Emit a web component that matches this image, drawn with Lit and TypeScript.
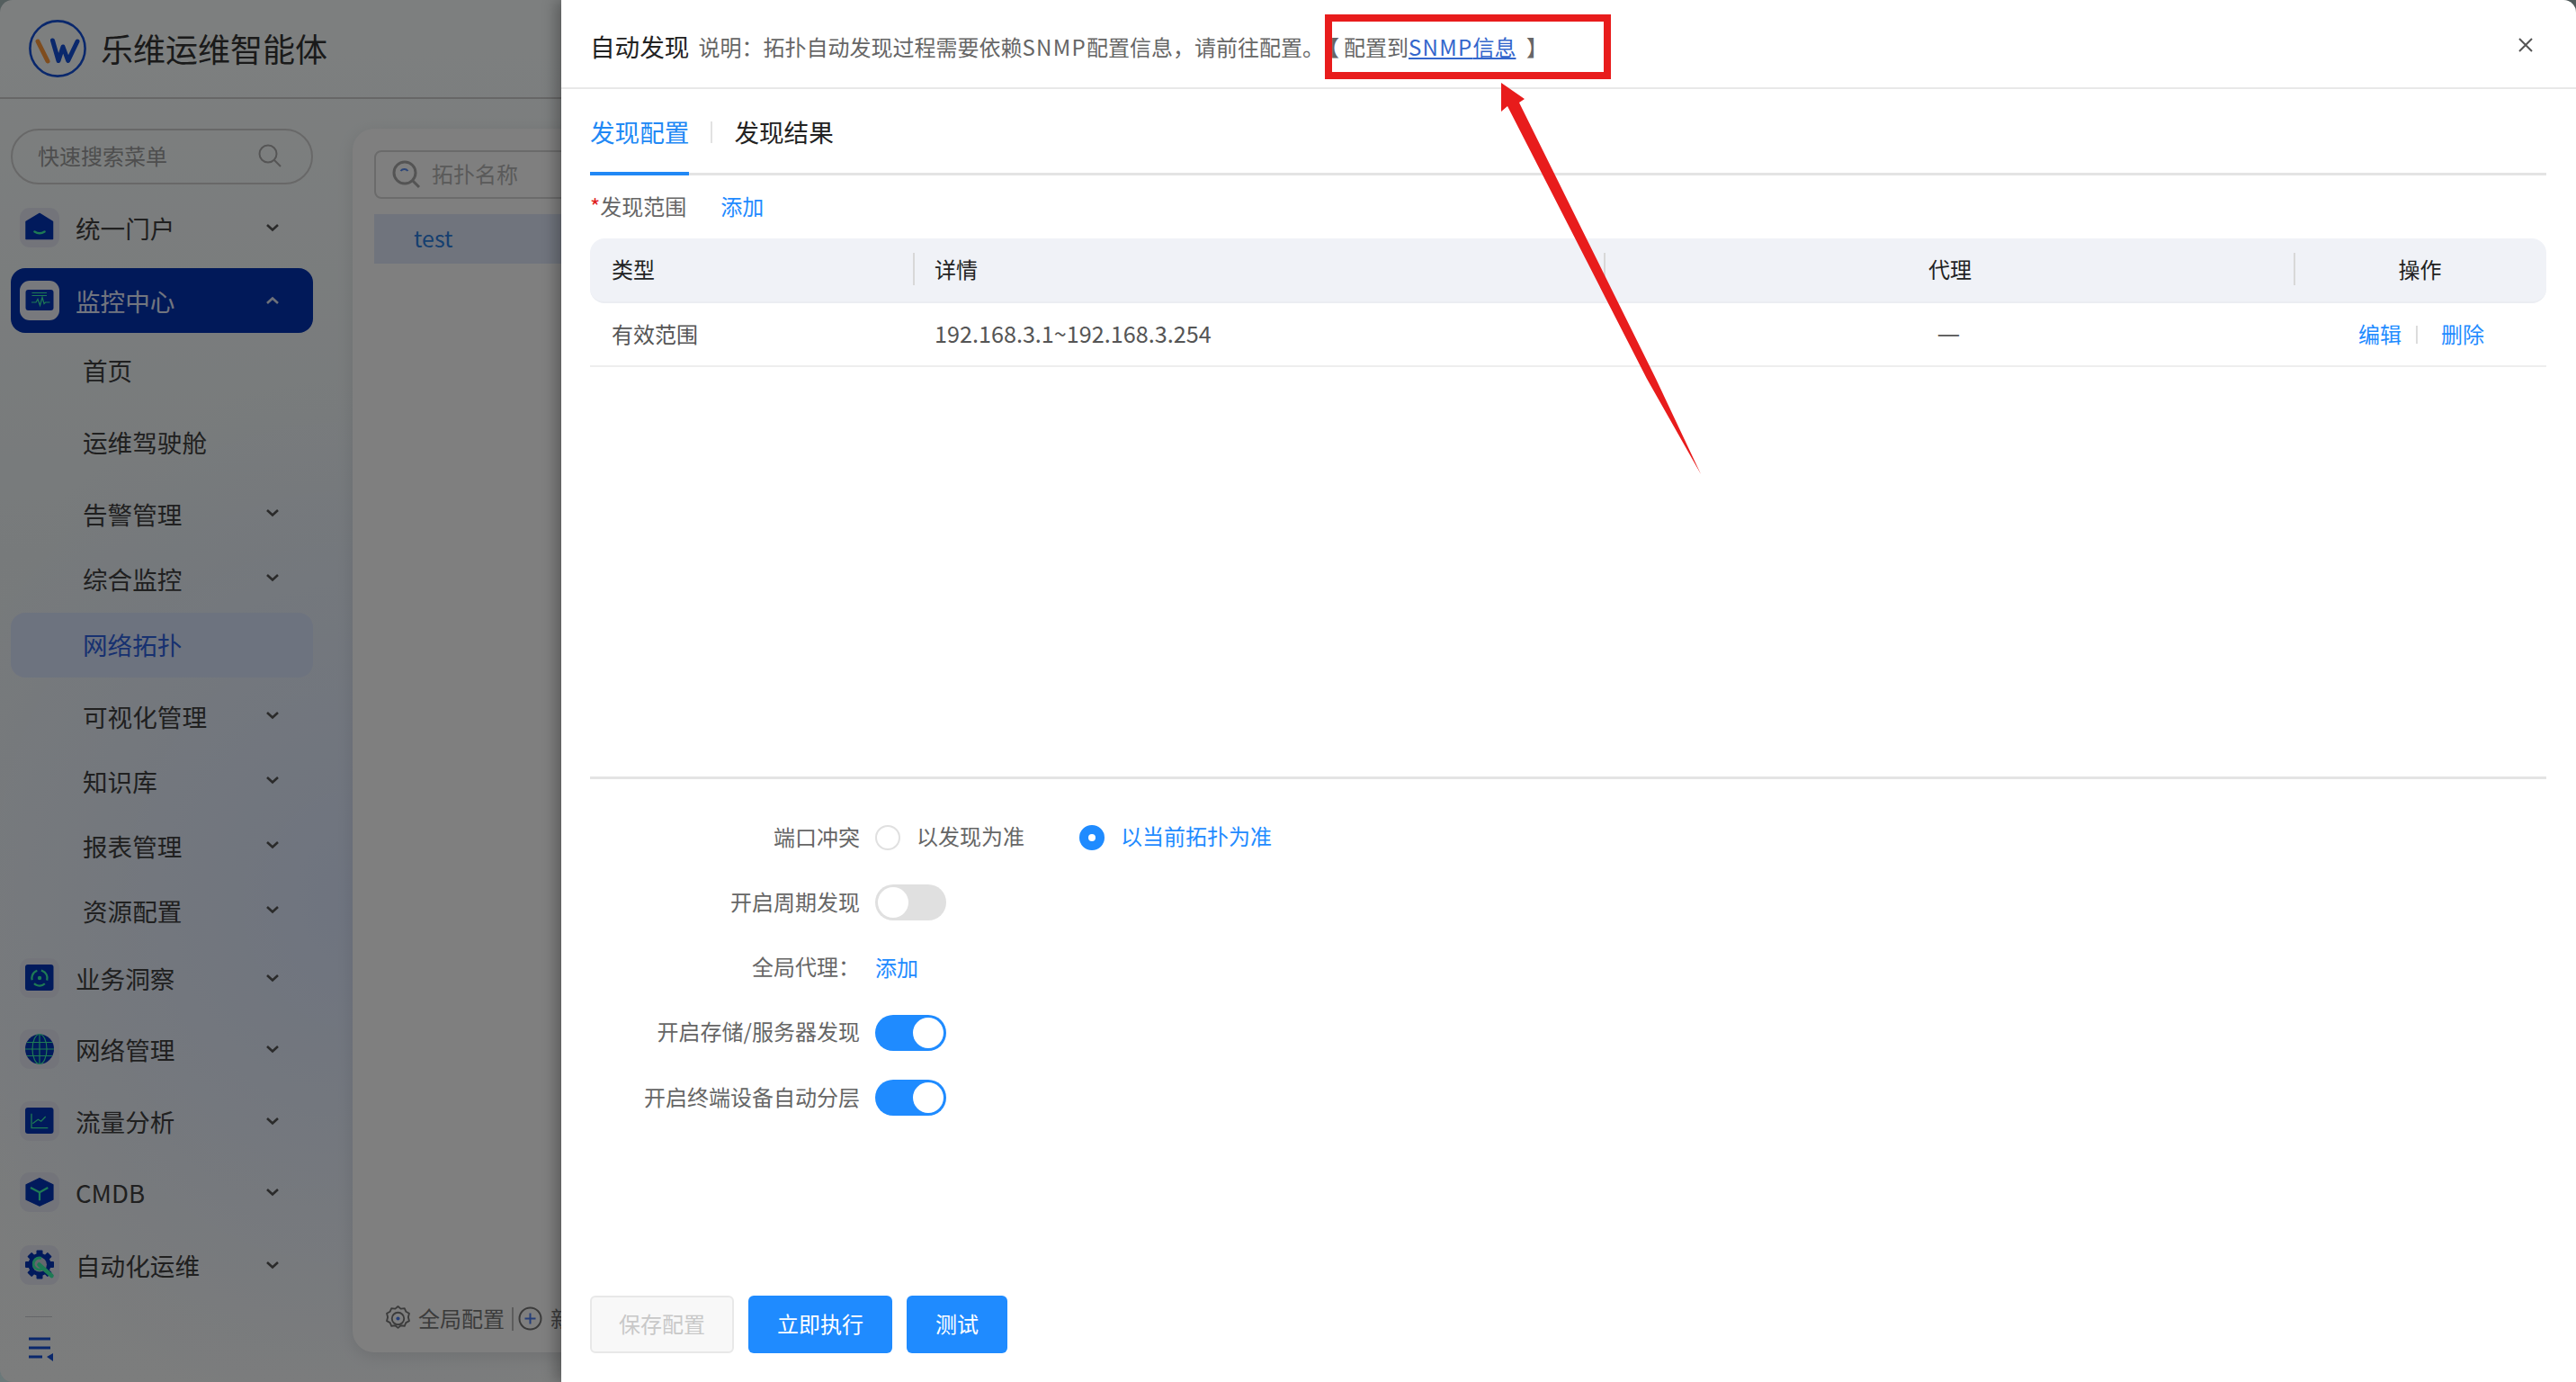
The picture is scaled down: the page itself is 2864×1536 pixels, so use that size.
import { LitElement, html, css, svg } from "lit";
import { customElement } from "lit/decorators.js";

const DARK = "#0234b8";
const GREEN = "#3df5a8";

const icons: Record<string, unknown> = {
  home: svg`<path d="M7 34.5V15.5L22 6.5 36.5 15.5V34.5Z" fill="${DARK}" stroke="${DARK}" stroke-width="1.5" stroke-linejoin="round"/><path d="M16.5 26.5q5.5 3.5 11 0" fill="none" stroke="${GREEN}" stroke-width="2.6" stroke-linecap="round"/>`,
  monitor: svg`<rect x="6.5" y="10" width="31" height="23" rx="3" fill="${DARK}"/><path d="M13.5 13.5H30M13.5 16.5H30" stroke="${GREEN}" stroke-width="1.2"/><path d="M13 24h5l2-3.5 2.5 7 2.500-9 2 7 1.500-1.500h5" fill="none" stroke="${GREEN}" stroke-width="1.2"/>`,
  insight: svg`<rect x="6" y="7" width="31.5" height="29" rx="3" fill="${DARK}"/><circle cx="22" cy="22" r="8.6" fill="none" stroke="${GREEN}" stroke-width="2.2" stroke-dasharray="13 4.5" transform="rotate(-70 22 22)"/><circle cx="22" cy="22" r="2.2" fill="${GREEN}"/>`,
  globe: svg`<ellipse cx="22" cy="22" rx="16" ry="16.5" fill="${DARK}"/><g fill="none" stroke="${GREEN}" stroke-width="1.2"><path d="M6 22H38M8 14.5H36M8 29.5H36M22 5.5V38.5"/><ellipse cx="22" cy="22" rx="8" ry="16.5"/></g>`,
  chart: svg`<rect x="6" y="7" width="31.5" height="29" rx="3" fill="${DARK}"/><path d="M13 13.7V29.7H31.3" fill="none" stroke="${GREEN}" stroke-width="1.3"/><path d="M14.3 24.7L20.3 20.3 23.7 22.3 28.7 17" fill="none" stroke="${GREEN}" stroke-width="1.3"/>`,
  cube: svg`<path d="M22 6.5L37 13.8V30.2L22 37.2 7 30.2V13.8Z" fill="${DARK}" stroke="${DARK}" stroke-width="1.2" stroke-linejoin="round"/><path d="M12 17L22 22.3 31.3 17M22 22.3V31.3" fill="none" stroke="${GREEN}" stroke-width="2.2"/>`,
  gear: svg`<g fill="${DARK}"><rect x="18.5" y="5.5" width="7" height="32" rx="1"/><rect x="18.5" y="5.5" width="7" height="32" rx="1" transform="rotate(45 22 21.5)"/><rect x="18.5" y="5.5" width="7" height="32" rx="1" transform="rotate(90 22 21.5)"/><rect x="18.5" y="5.5" width="7" height="32" rx="1" transform="rotate(135 22 21.5)"/><circle cx="22" cy="21.5" r="12.5"/></g><circle cx="22" cy="21.5" r="8" fill="#c9cfdc"/><path d="M21.5 21.5L35.5 34" fill="none" stroke="${GREEN}" stroke-width="4.6" stroke-linecap="round"/><path d="M24 14.5a6.5 6.5 0 1 0 2.5 10.5" fill="none" stroke="${GREEN}" stroke-width="3"/>`,
};

interface Item {
  label: string;
  gap: number;
  icon?: string;
  chevron?: boolean;
  open?: boolean;
  active?: boolean;
  current?: boolean;
}

const MENU: Item[] = [
  { label: "统一门户", gap: 0, icon: "home", chevron: true },
  { label: "监控中心", gap: 9, icon: "monitor", chevron: true, open: true, active: true },
  { label: "首页", gap: 6 },
  { label: "运维驾驶舱", gap: 8 },
  { label: "告警管理", gap: 8, chevron: true },
  { label: "综合监控", gap: 0, chevron: true },
  { label: "网络拓扑", gap: 1, current: true },
  { label: "可视化管理", gap: 8, chevron: true },
  { label: "知识库", gap: 0, chevron: true },
  { label: "报表管理", gap: 0, chevron: true },
  { label: "资源配置", gap: 0, chevron: true },
  { label: "业务洞察", gap: 2, icon: "insight", chevron: true },
  { label: "网络管理", gap: 7, icon: "globe", chevron: true },
  { label: "流量分析", gap: 8, icon: "chart", chevron: true },
  { label: "CMDB", gap: 7, icon: "cube", chevron: true },
  { label: "自动化运维", gap: 9, icon: "gear", chevron: true },
];

@customElement("app-root")
export class AppRoot extends LitElement {
  static styles = css`
    :host {
      display: block;
      width: 2864px;
      height: 1536px;
      position: relative;
      overflow: hidden;
      background: linear-gradient(180deg, #a8bcbc 0%, #d6f2f4 100%);
      font-family: "Noto Sans CJK SC", "Noto Sans", sans-serif;
      color: #444;
    }
    * { box-sizing: border-box; }
    .window {
      position: absolute;
      inset: 0;
      border-radius: 14px;
      overflow: hidden;
      display: flex;
      flex-direction: column;
      background:
        radial-gradient(ellipse 520px 580px at 400px 1000px, #dde8ff 0%, rgba(221, 232, 255, 0) 100%),
        linear-gradient(180deg, #fbffff 0%, #eff5f7 40%, #f8fafa 100%);
    }
    .topbar {
      height: 110px;
      flex: none;
      display: flex;
      align-items: center;
      padding-left: 32px;
      gap: 16px;
      border-bottom: 2px solid #cfcfcf;
    }
    .logo { width: 64px; height: 64px; flex: none; }
    .brand { font-size: 36px; line-height: 1; color: #343434; padding-bottom: 3px; }
    .main { flex: 1; display: flex; min-height: 0; }
    .sidebar {
      width: 392px;
      flex: none;
      padding: 33px 0 0 12px;
      display: flex;
      flex-direction: column;
    }
    .search {
      width: 336px;
      height: 62px;
      flex: none;
      border: 2px solid #d0d0d0;
      border-radius: 31px;
      display: flex;
      align-items: center;
      padding: 0 33px 0 28px;
      justify-content: space-between;
      font-size: 24px;
      color: #9c9c9c;
    }
    .search span { padding-bottom: 3px; }
    .search svg { width: 26px; height: 26px; margin-top: -2px; }
    .menu { margin-top: 12px; display: flex; flex-direction: column; }
    .row {
      width: 336px;
      height: 72px;
      flex: none;
      display: flex;
      align-items: center;
      border-radius: 16px;
      padding: 0 38px 0 10px;
      font-size: 27.6px;
      color: #404040;
    }
    .row > span { padding-bottom: 3px; }
    .row.sub { padding-left: 80px; }
    .row.active { background: #0232b2; color: #e4eaff; }
    .row.current { background: #dbe6ff; color: #2f62e0; }
    .row.icon-row > span { padding-bottom: 1px; }
    .m0 { margin-top: 0; }
    .m1 { margin-top: 1px; }
    .m2 { margin-top: 2px; }
    .m6 { margin-top: 6px; }
    .m7 { margin-top: 7px; }
    .m8 { margin-top: 8px; }
    .m9 { margin-top: 9px; }
    .icon-box {
      width: 44px;
      height: 44px;
      flex: none;
      border-radius: 11px;
      background: #e6e9f4;
      margin-right: 18px;
    }
    .active .icon-box { background: #f0f2fb; }
    .icon-box svg { display: block; width: 44px; height: 44px; }
    .chev { width: 14px; height: 10px; margin-left: auto; flex: none; color: #555; }
    .sub .chev { margin-top: -4px; }
    .active .chev { color: #dde2f2; }
    .collapse-line {
      width: 30px;
      height: 1px;
      background: #c8cad0;
      margin: 21px 0 0 16px;
      flex: none;
    }
    .collapse { width: 30px; height: 28px; margin: 22px 0 0 20px; flex: none; }
    .content { flex: 1; min-width: 0; padding: 33px 0 33px 0; }
    .card {
      height: 100%;
      border-radius: 24px;
      background: #fff;
      box-shadow: 0 4px 18px rgba(0, 0, 0, 0.1);
      padding: 24px 0 0 24px;
      display: flex;
      flex-direction: column;
    }
    .tree-search {
      width: 420px;
      height: 54px;
      flex: none;
      border: 2px solid #d6d6d6;
      border-radius: 8px;
      display: flex;
      align-items: center;
      padding-left: 18px;
      gap: 12px;
      font-size: 24px;
      color: #b4b4b4;
    }
    .tree-search span { padding-bottom: 3px; }
    .tree-search svg { width: 32px; height: 32px; flex: none; }
    .tree-row {
      margin-top: 17px;
      height: 55px;
      flex: none;
      background: #e0e8fb;
      color: #2c7fe0;
      display: flex;
      align-items: center;
      padding: 0 0 3px 44px;
      font-size: 25px;
    }
    .card-foot {
      margin-top: auto;
      height: 64px;
      flex: none;
      display: flex;
      align-items: flex-start;
      padding: 12px 0 0 12px;
      font-size: 24px;
      color: #777;
      gap: 8px;
    }
    .card-foot svg { width: 29px; height: 29px; flex: none; }
    .card-foot span { line-height: 28px; }
    .foot-sep { width: 2px; height: 26px; background: #bbb; flex: none; margin: 2px -4px 0 0; }

    .mask { position: absolute; inset: 0; background: rgba(0, 0, 0, 0.5); }
    .drawer {
      position: absolute;
      top: 0;
      right: 0;
      bottom: 0;
      width: 2240px;
      background: #fff;
      border-radius: 0 14px 0 0;
      box-shadow: -6px 0 16px rgba(0, 0, 0, 0.28);
      display: flex;
      flex-direction: column;
      color: #666;
      font-size: 24px;
    }
    .dhead {
      height: 99px;
      flex: none;
      border-bottom: 2px solid #e8e8e8;
      display: flex;
      align-items: center;
      padding: 7px 47px 0 32px;
    }
    .dtitle { font-size: 27.6px; color: #222; margin-right: 10px; line-height: 1; }
    .dnote { line-height: 1; white-space: pre; }
    .dnote a { color: #3366cc; text-decoration: underline; }
    .lat { letter-spacing: 1.3px; }
    .bl { margin: 0 5px 0 5px; }
    .br { margin-left: 6px; }
    .close { width: 18px; height: 18px; margin-left: auto; flex: none; margin-top: -5px; }
    .dbody {
      flex: 1;
      display: flex;
      flex-direction: column;
      padding: 0 33px 0 32px;
      min-height: 0;
    }
    .tabs {
      height: 96px;
      flex: none;
      display: flex;
      align-items: stretch;
      border-bottom: 3px solid #e4e4e4;
      font-size: 27.6px;
      color: #222;
    }
    .tab { display: flex; align-items: center; padding-top: 1px; }
    .tab.on { color: #2188f5; border-bottom: 4px solid #2188f5; margin-bottom: -3px; }
    .tab-sep { width: 2px; height: 24px; background: #e2e2e2; margin: 36px 24px 0; flex: none; }
    .range { height: 70px; flex: none; display: flex; align-items: center; padding-bottom: 3px; }
    .req { color: #e02020; }
    .link { color: #1f8bff; }
    .range .link { margin-left: 38px; }
    .thead, .trow {
      display: grid;
      grid-template-columns: 359px 768px 767px 1fr;
      flex: none;
    }
    .thead {
      height: 72px;
      background: #f0f2f7;
      border-radius: 16px;
      border-bottom: 2px solid #ebedf2;
      color: #222;
      align-items: center;
    }
    .thead > div { position: relative; padding: 0 0 3px 24px; }
    .thead > div + div::before {
      content: "";
      position: absolute;
      left: 0;
      top: 0;
      width: 2px;
      height: 36px;
      background: #d8d8d8;
    }
    .thead > div.center, .trow > div.center { text-align: center; padding-left: 0; }
    .thead > div.agent { padding-left: 3px; }
    .trow {
      height: 71px;
      border-bottom: 2px solid #eeeeee;
      align-items: center;
      color: #555;
    }
    .trow > div { padding: 0 0 3px 24px; }
    .ip { font-size: 25.2px; }
    .dash { font-size: 29px; line-height: 1; }
    .acts { display: flex; justify-content: center; align-items: center; padding-left: 3px !important; }
    .act-sep { width: 2px; height: 20px; background: #dcdcdc; margin: 3px 26px 0 16px; }
    .spacer { flex: 1; }
    .lower {
      height: 673px;
      flex: none;
      border-top: 3px solid #e4e4e4;
      display: flex;
      flex-direction: column;
      padding-top: 29px;
    }
    .frow { height: 72.25px; flex: none; display: flex; align-items: center; }
    .flabel { width: 300px; text-align: right; flex: none; margin-right: 17px; line-height: 1; padding-bottom: 3px; }
    .frow > .link { padding-bottom: 3px; }
    .radio {
      width: 28px;
      height: 28px;
      border-radius: 50%;
      border: 2px solid #e0e0e0;
      flex: none;
      background: #fff;
      margin-right: 18px;
    }
    .radio.on { border: 10px solid #1f8bff; }
    .ropt { margin-right: 61px; padding-bottom: 6px; }
    .ropt.on { color: #1f8bff; }
    .switch {
      width: 79px;
      height: 40px;
      border-radius: 20px;
      background: #e0e0e0;
      padding: 3px;
      display: flex;
      flex: none;
    }
    .switch.on { background: #1f8bff; justify-content: flex-end; }
    .knob { width: 34px; height: 34px; border-radius: 50%; background: #fff; }
    .btns {
      margin-top: auto;
      margin-bottom: 32px;
      display: flex;
      gap: 16px;
      flex: none;
    }
    .btn {
      height: 64px;
      width: 160px;
      border-radius: 6px;
      display: flex;
      align-items: center;
      justify-content: center;
      background: #1f8bff;
      color: #fff;
      flex: none;
      padding-bottom: 3px;
    }
    .btn.small { width: 112px; }
    .btn.off { background: #f8f8f8; border: 2px solid #e8e8e8; color: #c8c8c8; }
    .redbox {
      position: absolute;
      left: 1473px;
      top: 16px;
      width: 318px;
      height: 72px;
      border: 8px solid #e81c1c;
    }
    .arrow { position: absolute; left: 0; top: 0; width: 2864px; height: 1536px; pointer-events: none; }
  `;

  private renderRow(it: Item) {
    const cls = ["row", `m${it.gap}`, it.icon ? "icon-row" : "sub", it.active ? "active" : "", it.current ? "current" : ""].join(" ");
    return html`<div class=${cls}>
      ${it.icon ? html`<div class="icon-box"><svg viewBox="0 0 44 44">${icons[it.icon]}</svg></div>` : ""}
      <span>${it.label}</span>
      ${it.chevron
        ? html`<svg class="chev" viewBox="0 0 14 10"><path d=${it.open ? "M1 8L7 2.5 13 8" : "M1 2L7 7.500 13 2"} fill="none" stroke="currentColor" stroke-width="2.6"/></svg>`
        : ""}
    </div>`;
  }

  private renderForm() {
    return html`
      <div class="frow">
        <div class="flabel">端口冲突</div>
        <div class="radio"></div><div class="ropt">以发现为准</div>
        <div class="radio on"></div><div class="ropt on">以当前拓扑为准</div>
      </div>
      <div class="frow"><div class="flabel">开启周期发现</div><div class="switch"><div class="knob"></div></div></div>
      <div class="frow"><div class="flabel">全局代理：</div><div class="link">添加</div></div>
      <div class="frow"><div class="flabel">开启存储/服务器发现</div><div class="switch on"><div class="knob"></div></div></div>
      <div class="frow"><div class="flabel">开启终端设备自动分层</div><div class="switch on"><div class="knob"></div></div></div>
    `;
  }

  render() {
    return html`
      <div class="window">
        <div class="topbar">
          <svg class="logo" viewBox="0 0 64 64">
            <circle cx="32" cy="32" r="30.6" fill="none" stroke="#1450d8" stroke-width="2.6"/>
            <path d="M10 24L21 46" fill="none" stroke="#ff9a3d" stroke-width="5" stroke-linecap="round"/>
            <path d="M26.5 23L33 45.5 38 30 43.7 45.5 54 24" fill="none" stroke="#1450d8" stroke-width="5" stroke-linecap="round" stroke-linejoin="round"/>
          </svg>
          <div class="brand">乐维运维智能体</div>
        </div>
        <div class="main">
          <div class="sidebar">
            <div class="search">
              <span>快速搜索菜单</span>
              <svg viewBox="0 0 26 26"><circle cx="11" cy="11" r="9.5" fill="none" stroke="#aaa" stroke-width="2"/><path d="M18 18L25 25" stroke="#aaa" stroke-width="2"/></svg>
            </div>
            <div class="menu">${MENU.map((it) => this.renderRow(it))}</div>
            <div class="collapse-line"></div>
            <svg class="collapse" viewBox="0 0 30 28">
              <path d="M0 2H24M0 12H24M0 22H15" fill="none" stroke="#1450d8" stroke-width="3"/>
              <path d="M20 22L27 18V27Z" fill="#1450d8"/>
            </svg>
          </div>
          <div class="content">
            <div class="card">
              <div class="tree-search">
                <svg viewBox="0 0 32 32"><circle cx="14" cy="14" r="12" fill="none" stroke="#a8a8a8" stroke-width="3"/><path d="M23 23L30 30" stroke="#a8a8a8" stroke-width="3"/><path d="M9.5 12a5 5 0 0 1 8 0" fill="none" stroke="#5b8cf0" stroke-width="2"/></svg>
                <span>拓扑名称</span>
              </div>
              <div class="tree-row">test</div>
              <div class="card-foot">
                <svg viewBox="0 0 28 28"><path d="M14 1l3 2.5 4-.5 1.500 3.500 3.500 2-1 4 1 4-3.500 2-1.500 3.500-4-.5-3 2.500-3-2.500-4 .5-1.500-3.500-3.500-2 1-4-1-4 3.500-2L7 3l4 .5z" fill="none" stroke="#777" stroke-width="1.8" stroke-linejoin="round"/><circle cx="14" cy="14" r="6.500" fill="none" stroke="#777" stroke-width="1.8"/><circle cx="14" cy="14" r="2" fill="#4a7df0"/></svg>
                <span>全局配置</span>
                <div class="foot-sep"></div>
                <svg viewBox="0 0 29 29"><circle cx="14.500" cy="14.500" r="12" fill="none" stroke="#777" stroke-width="2"/><path d="M14.500 8.500V20.500M8.500 14.500H20.500" stroke="#4a7df0" stroke-width="2"/></svg>
                <span>新建</span>
              </div>
            </div>
          </div>
        </div>
      </div>
      <div class="mask"></div>
      <div class="drawer">
        <div class="dhead">
          <div class="dtitle">自动发现</div>
          <div class="dnote">说明：拓扑自动发现过程需要依赖<span class="lat">SNMP</span>配置信息，请前往配置。<span class="bl">【</span>配置到<a><span class="lat">SNMP</span>信息</a> <span class="br">】</span></div>
          <svg class="close" viewBox="0 0 18 18"><path d="M2 2L16 16M16 2L2 16" fill="none" stroke="#555" stroke-width="2"/></svg>
        </div>
        <div class="dbody">
          <div class="tabs">
            <div class="tab on">发现配置</div>
            <div class="tab-sep"></div>
            <div class="tab">发现结果</div>
          </div>
          <div class="range"><span><span class="req">*</span>发现范围</span><span class="link">添加</span></div>
          <div class="thead">
            <div>类型</div><div>详情</div><div class="center agent">代理</div><div class="center">操作</div>
          </div>
          <div class="trow">
            <div>有效范围</div>
            <div class="ip">192.168.3.1~192.168.3.254</div>
            <div class="center"><span class="dash">—</span></div>
            <div class="acts"><span class="link">编辑</span><span class="act-sep"></span><span class="link">删除</span></div>
          </div>
          <div class="spacer"></div>
          <div class="lower">
            ${this.renderForm()}
            <div class="btns">
              <div class="btn off">保存配置</div>
              <div class="btn">立即执行</div>
              <div class="btn small">测试</div>
            </div>
          </div>
        </div>
      </div>
      <div class="redbox"></div>
      <svg class="arrow" viewBox="0 0 2864 1536">
        <polygon points="1669,92 1695,110 1689,114 1841,421 1891,527 1831,421 1676,118 1669,124" fill="#e81c1c"/>
      </svg>
    `;
  }
}
